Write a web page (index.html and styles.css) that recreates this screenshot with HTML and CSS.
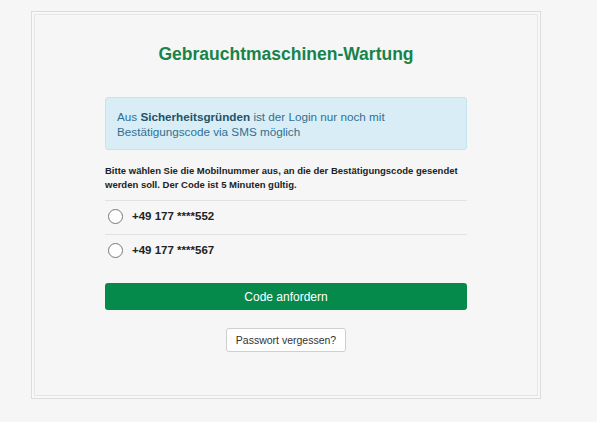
FILE: index.html
```html
<!DOCTYPE html>
<html>

<head>
  <title>Gebrauchtmaschinen-Wartung</title>
  <link rel="stylesheet" href="styles.css">
</head>

<body>
  <div class="login-box">
    <h1 class="title">Gebrauchtmaschinen-Wartung</h1>

    <div class="alert">
      Aus <b>Sicherheitsgründen</b> ist der Login nur noch mit Bestätigungscode via SMS möglich
    </div>

    <p class="hint">Bitte wählen Sie die Mobilnummer aus, an die der Bestätigungscode gesendet werden soll. Der Code ist 5 Minuten gültig.</p>

    <div class="numbers">
      <label class="number">
        <input type="radio" name="phone" value="0" /> <span>+49 177 ****552</span>
      </label>
      <label class="number">
        <input type="radio" name="phone" value="1" /> <span>+49 177 ****567</span>
      </label>
    </div>

    <button class="btn-send">Code anfordern</button>

    <div class="forgot">
      <button class="btn-forgot">Passwort vergessen?</button>
    </div>
  </div>
</body>

</html>
```

FILE: styles.css
```css
body {
  margin: 0;
  background: #f6f6f6;
  font-family: "Liberation Sans", Arial, sans-serif;
  color: #333;
}

.login-box {
  margin: 11px 0 0 31px;
  width: 362px;
  height: 386px;
  padding: 0 73px;
  border: 1px solid #dcdcdc;
  box-shadow: inset 0 0 0 2px #f8f8f8, inset 0 0 0 3px #e6e6e6;
  background: #f6f6f6;
}

.title {
  margin: 30px 0 0;
  padding: 0;
  font-size: 17.5px;
  line-height: 24px;
  text-align: center;
  color: #17834a;
}

.alert {
  margin-top: 31px;
  padding: 11px 11px 10px;
  background: #d9edf7;
  border: 1px solid #c4e4f0;
  border-radius: 3px;
  color: #31708f;
  font-size: 11.7px;
  line-height: 15px;
}

.alert b {
  color: #245269;
}

.hint {
  margin: 14px 0 0;
  font-size: 9.5px;
  font-weight: bold;
  line-height: 14px;
  color: #222;
}

.numbers {
  margin-top: 8px;
}

.number {
  display: flex;
  align-items: center;
  height: 30px;
  padding-bottom: 3px;
  border-top: 1px solid #e2e2e2;
  font-size: 11.5px;
  font-weight: bold;
  color: #222;
}

.number input {
  margin: 0 9px 0 3px;
  width: 15px;
  height: 15px;
}

.btn-send {
  display: block;
  margin-top: 15px;
  width: 100%;
  height: 27px;
  border: none;
  border-radius: 3px;
  background: #068a4c;
  color: white;
  font-family: "Liberation Sans", Arial, sans-serif;
  font-size: 12px;
  cursor: pointer;
}

.forgot {
  margin-top: 18px;
  text-align: center;
}

.btn-forgot {
  padding: 0 9px;
  height: 24px;
  border: 1px solid #cfcfcf;
  border-radius: 3px;
  background: white;
  color: #333;
  font-family: "Liberation Sans", Arial, sans-serif;
  font-size: 10.5px;
  cursor: pointer;
}
```
